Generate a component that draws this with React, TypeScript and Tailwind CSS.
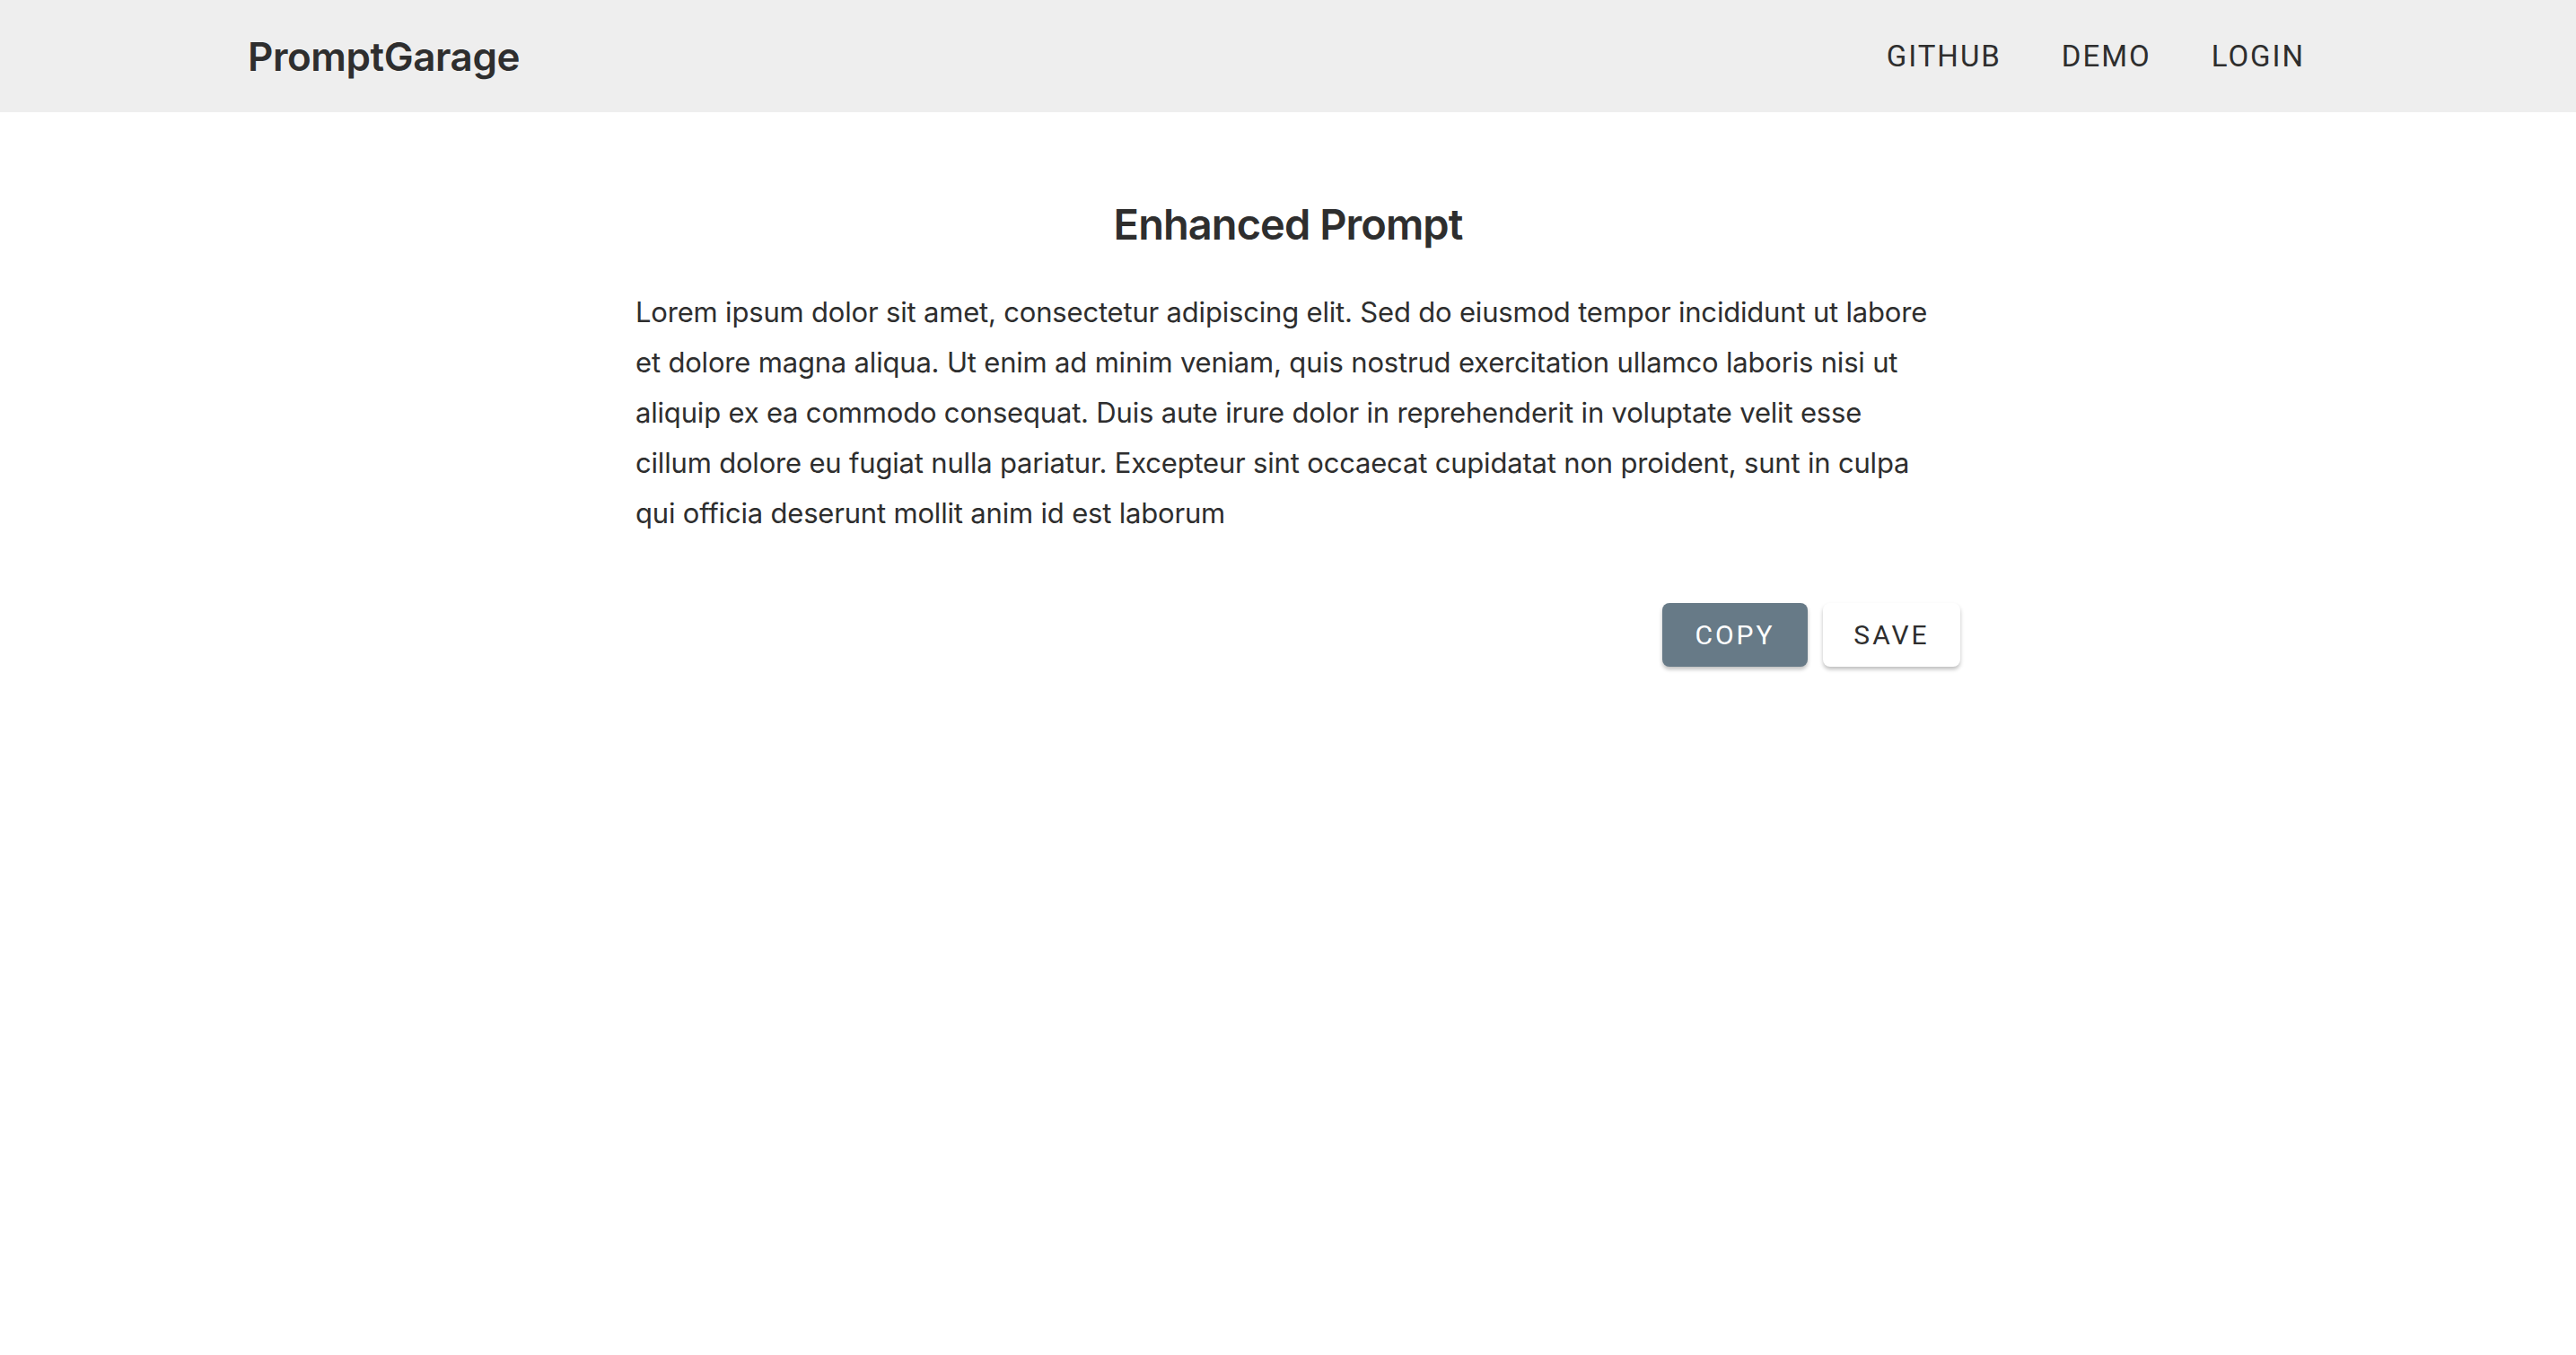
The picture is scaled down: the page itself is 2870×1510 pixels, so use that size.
import React from 'react';

const navItems = ['GITHUB', 'DEMO', 'LOGIN'];

const body =
  'Lorem ipsum dolor sit amet, consectetur adipiscing elit. Sed do eiusmod tempor incididunt ut labore et dolore magna aliqua. Ut enim ad minim veniam, quis nostrud exercitation ullamco laboris nisi ut aliquip ex ea commodo consequat. Duis aute irure dolor in reprehenderit in voluptate velit esse cillum dolore eu fugiat nulla pariatur. Excepteur sint occaecat cupidatat non proident, sunt in culpa qui officia deserunt mollit anim id est laborum';

export default function App() {
  return (
    <div className="min-h-screen bg-white text-[#2e2e2e] font-['Inter','Roboto',sans-serif]">
      {/* Top bar */}
      <header className="h-[125px] bg-[#eeeeee] flex items-center justify-between pl-[276px] pr-[302px]">
        <div className="text-[44px] font-semibold tracking-[-0.01em]">PromptGarage</div>
        <nav className="flex items-center gap-[67px] font-['Roboto',sans-serif] text-[33px] tracking-[0.06em]">
          {navItems.map((item) => (
            <a key={item} className="cursor-pointer">
              {item}
            </a>
          ))}
        </nav>
      </header>

      {/* Content */}
      <main className="flex justify-center pt-[97px]">
        <div className="w-[1498px] flex flex-col">
          <h1 className="text-center text-[47px] leading-[56px] font-semibold tracking-[-0.02em]">Enhanced Prompt</h1>
          <p className="mt-[42px] pl-[22px] pr-[32px] text-[31px] leading-[56px] tracking-[-0.006em]">{body}</p>
          <div className="mt-[72px] flex justify-end gap-[17px] font-['Roboto',sans-serif] text-[30px] tracking-[0.1em]">
            <button className="w-[162px] h-[71px] rounded-[8px] bg-[#677a87] text-white shadow-[0_3px_4px_rgba(0,0,0,0.25)]">
              COPY
            </button>
            <button className="w-[153px] h-[71px] rounded-[8px] bg-white text-[#2e2e2e] shadow-[0_3px_4px_rgba(0,0,0,0.25)]">
              SAVE
            </button>
          </div>
        </div>
      </main>
    </div>
  );
}
